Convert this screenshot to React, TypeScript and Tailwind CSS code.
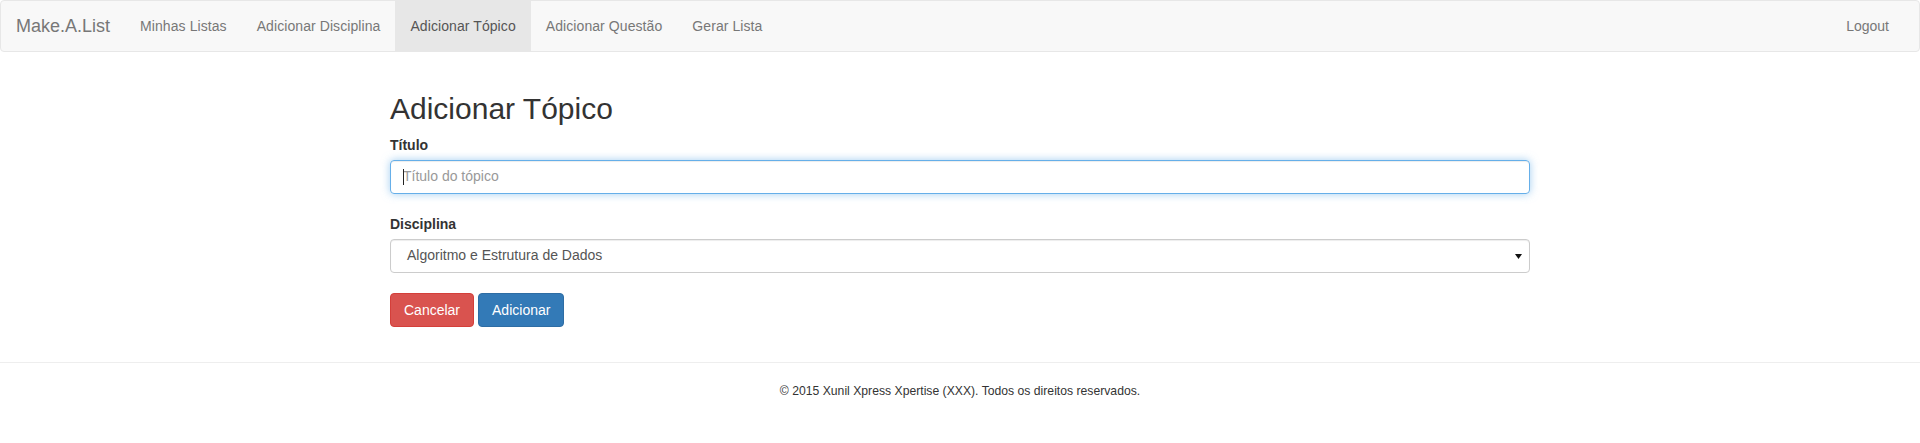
import React from "react";

export default function App() {
  const navItems = [
    { label: "Minhas Listas", active: false },
    { label: "Adicionar Disciplina", active: false },
    { label: "Adicionar Tópico", active: true },
    { label: "Adicionar Questão", active: false },
    { label: "Gerar Lista", active: false },
  ];
  return (
    <div
      className="min-h-[443px] bg-white text-[14px] leading-[1.42857] text-[#333]"
      style={{ fontFamily: '"Liberation Sans", Arial, Helvetica, sans-serif' }}
    >
      <nav className="mb-5 flex h-[52px] rounded border border-[#e7e7e7] bg-[#f8f8f8]">
        <div className="h-[50px] p-[15px] text-[18px] leading-5 text-[#777]">Make.A.List</div>
        <ul className="flex">
          {navItems.map((it) => (
            <li key={it.label}>
              <span
                className={
                  "block px-[15px] py-[15px] leading-5 tracking-[0.08px] " +
                  (it.active ? "bg-[#e7e7e7] text-[#555]" : "text-[#777]")
                }
              >
                {it.label}
              </span>
            </li>
          ))}
        </ul>
        <ul className="ml-auto mr-[15px] flex">
          <li>
            <span className="block px-[15px] py-[15px] leading-5 text-[#777]">Logout</span>
          </li>
        </ul>
      </nav>

      <main className="mx-auto flow-root w-[1140px]">
        <h2 className="mb-[10px] mt-5 text-[30px] font-medium leading-[1.1]">Adicionar Tópico</h2>
        <div className="mb-5">
          <label className="mb-[5px] block font-bold leading-5">Título</label>
          <div className="relative flex h-[34px] items-center rounded border border-[#66afe9] px-3 shadow-[inset_0_1px_1px_rgba(0,0,0,0.075),0_0_8px_rgba(102,175,233,0.6)]">
            <span className="text-[#999]">Título do tópico</span>
            <span className="absolute left-[12px] top-[8px] h-[16px] w-px bg-[#222]" />
          </div>
        </div>
        <div className="mb-5">
          <label className="mb-[5px] block font-bold leading-5">Disciplina</label>
          <div className="flex h-[34px] items-center justify-between rounded border border-[#ccc] pl-4 pr-[7px] text-[#555] shadow-[inset_0_1px_1px_rgba(0,0,0,0.075)]">
            <span>Algoritmo e Estrutura de Dados</span>
            <svg width="7" height="5" viewBox="0 0 7 5" className="mt-px">
              <path d="M0 0h7L3.5 5z" fill="#111" />
            </svg>
          </div>
        </div>
        <div className="flex gap-1">
          <button className="h-[34px] rounded border border-[#d43f3a] bg-[#d9534f] px-[13px] leading-5 text-white">
            Cancelar
          </button>
          <button className="h-[34px] rounded border border-[#2e6da4] bg-[#337ab7] px-[13px] leading-5 text-white">
            Adicionar
          </button>
        </div>
      </main>

      <footer className="mt-[35px] border-t border-[#eee] pt-5 text-center text-[12.2px] text-[#333]">
        © 2015 Xunil Xpress Xpertise (XXX). Todos os direitos reservados.
      </footer>
    </div>
  );
}
